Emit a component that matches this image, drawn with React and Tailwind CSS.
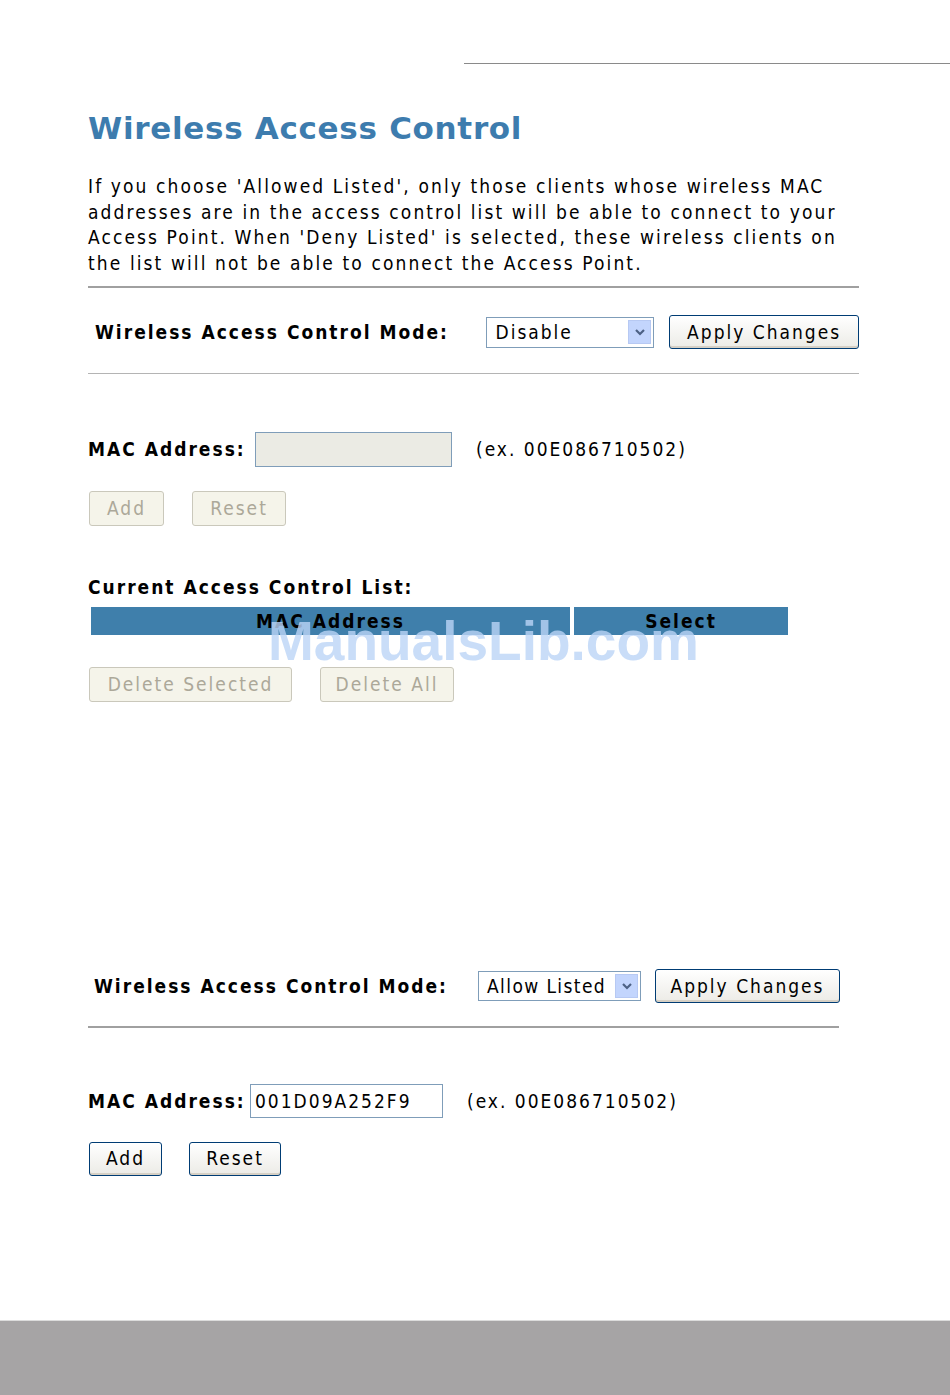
import React from 'react';

const FONT = '[font-family:"DejaVu_Sans_Condensed","DejaVu_Sans",sans-serif]';

function Select({ value, width, height = 'h-[31px]', tracking = 'tracking-[2px]' }) {
    return (
        <div className={`flex items-center border border-[#7f9db9] bg-white pl-2 pr-[2px] ${width} ${height}`}>
            <span className={`flex-1 text-[19px] text-black leading-none ${tracking}`}>{value}</span>
            <span className="w-[23px] h-[24px] bg-[#c3d5fd] border border-[#b7c9f3] flex items-center justify-center">
                <svg width="12" height="10" viewBox="0 0 12 10">
                    <path d="M2 3 L6 7 L10 3" stroke="#4d6185" strokeWidth="2.2" fill="none" />
                </svg>
            </span>
        </div>
    );
}

function Button({ children, disabled, className = '' }) {
    return disabled ? (
        <button
            disabled
            className={`h-[35px] rounded-[3px] border border-[#cac8bb] bg-[#f5f4ea] text-[#aca899] text-[19px] leading-none tracking-[2px] ${className}`}
        >
            {children}
        </button>
    ) : (
        <button
            className={`h-[34px] rounded-[3px] border border-[#003c74] bg-gradient-to-b from-white to-[#ecebe6] text-black text-[19px] leading-none tracking-[2px] shadow-[inset_0_-2px_0_#d6d0c5] ${className}`}
        >
            {children}
        </button>
    );
}

export default function App() {
    return (
        <div className={`relative w-[950px] h-[1395px] bg-white flex flex-col ${FONT}`}>
            <div className="mt-[63px] ml-[464px] h-px bg-[#8a8a8a]" />

            <div className="ml-[88px] w-[771px] flex flex-col">
                <h1 className="mt-[44px] text-[31px] leading-[40px] font-bold text-[#3d7cae] tracking-[0.7px] [font-family:'DejaVu_Sans',sans-serif]">
                    Wireless Access Control
                </h1>

                <p className="mt-[26px] text-[19px] leading-[25.7px] text-black tracking-[2.1px]">
                    If you choose 'Allowed Listed', only those clients whose wireless MAC<br />
                    addresses are in the access control list will be able to connect to your<br />
                    Access Point. When 'Deny Listed' is selected, these wireless clients on<br />
                    the list will not be able to connect the Access Point.
                </p>

                <div className="mt-[9px] h-[2px] bg-[#a0a0a0]" />

                <div className="h-[85px] pt-[4px] flex items-center">
                    <span className="ml-[7px] w-[392px] font-bold text-[19px] tracking-[2px]">Wireless Access Control Mode:</span>
                    <Select value="Disable" width="w-[168px]" />
                    <Button className="ml-[15px] w-[190px]">Apply Changes</Button>
                </div>

                <div className="h-px bg-[#b4b4b4]" />

                <div className="mt-[58px] flex items-center h-[35px]">
                    <span className="font-bold text-[19px] tracking-[2px] w-[167px]">MAC Address:</span>
                    <div className="w-[197px] h-[35px] border border-[#7f9db9] bg-[#ebebe4]" />
                    <span className="ml-[24px] text-[19px] tracking-[2px]">(ex. 00E086710502)</span>
                </div>

                <div className="mt-[24px] flex gap-[28px] ml-px">
                    <Button disabled className="w-[75px]">Add</Button>
                    <Button disabled className="w-[94px]">Reset</Button>
                </div>

                <div className="mt-[48px] font-bold text-[19px] tracking-[2px] leading-[26px]">Current Access Control List:</div>

                <div className="mt-[7px] ml-[3px] flex gap-[4px] h-[28px]">
                    <div className="w-[479px] bg-[#3f7fab] flex items-center justify-center font-bold text-[19px] tracking-[2px] text-black">MAC Address</div>
                    <div className="w-[214px] bg-[#3f7fab] flex items-center justify-center font-bold text-[19px] tracking-[2px] text-black">Select</div>
                </div>

                <div className="mt-[32px] flex gap-[28px] ml-px">
                    <Button disabled className="w-[203px]">Delete Selected</Button>
                    <Button disabled className="w-[134px]">Delete All</Button>
                </div>

                <div className="mt-[267px] h-[35px] flex items-center">
                    <span className="ml-[6px] w-[384px] font-bold text-[19px] tracking-[2px]">Wireless Access Control Mode:</span>
                    <Select value="Allow Listed" width="w-[163px]" height="h-[30px]" tracking="tracking-[1.4px]" />
                    <Button className="ml-[14px] w-[185px]">Apply Changes</Button>
                </div>

                <div className="mt-[22px] w-[751px] h-[2px] bg-[#a0a0a0]" />

                <div className="mt-[56px] flex items-center h-[34px]">
                    <span className="font-bold text-[19px] tracking-[2px] w-[162px]">MAC Address:</span>
                    <div className="w-[193px] h-[34px] border border-[#7f9db9] bg-white flex items-center pl-[4px] text-[19px] tracking-[2px]">001D09A252F9</div>
                    <span className="ml-[24px] text-[19px] tracking-[2px]">(ex. 00E086710502)</span>
                </div>

                <div className="mt-[24px] flex gap-[27px] ml-px">
                    <Button className="w-[73px]">Add</Button>
                    <Button className="w-[92px]">Reset</Button>
                </div>
            </div>

            <div className="mt-auto h-[75px] bg-[#a6a4a5] border-t border-[#dcdcdc]" />

            <div className="absolute left-[268px] top-[614px] text-[55px] leading-none font-bold text-[#bcd4f6]/80 [font-family:'Liberation_Sans',Arial,sans-serif] pointer-events-none">
                ManualsLib.com
            </div>
        </div>
    );
}
